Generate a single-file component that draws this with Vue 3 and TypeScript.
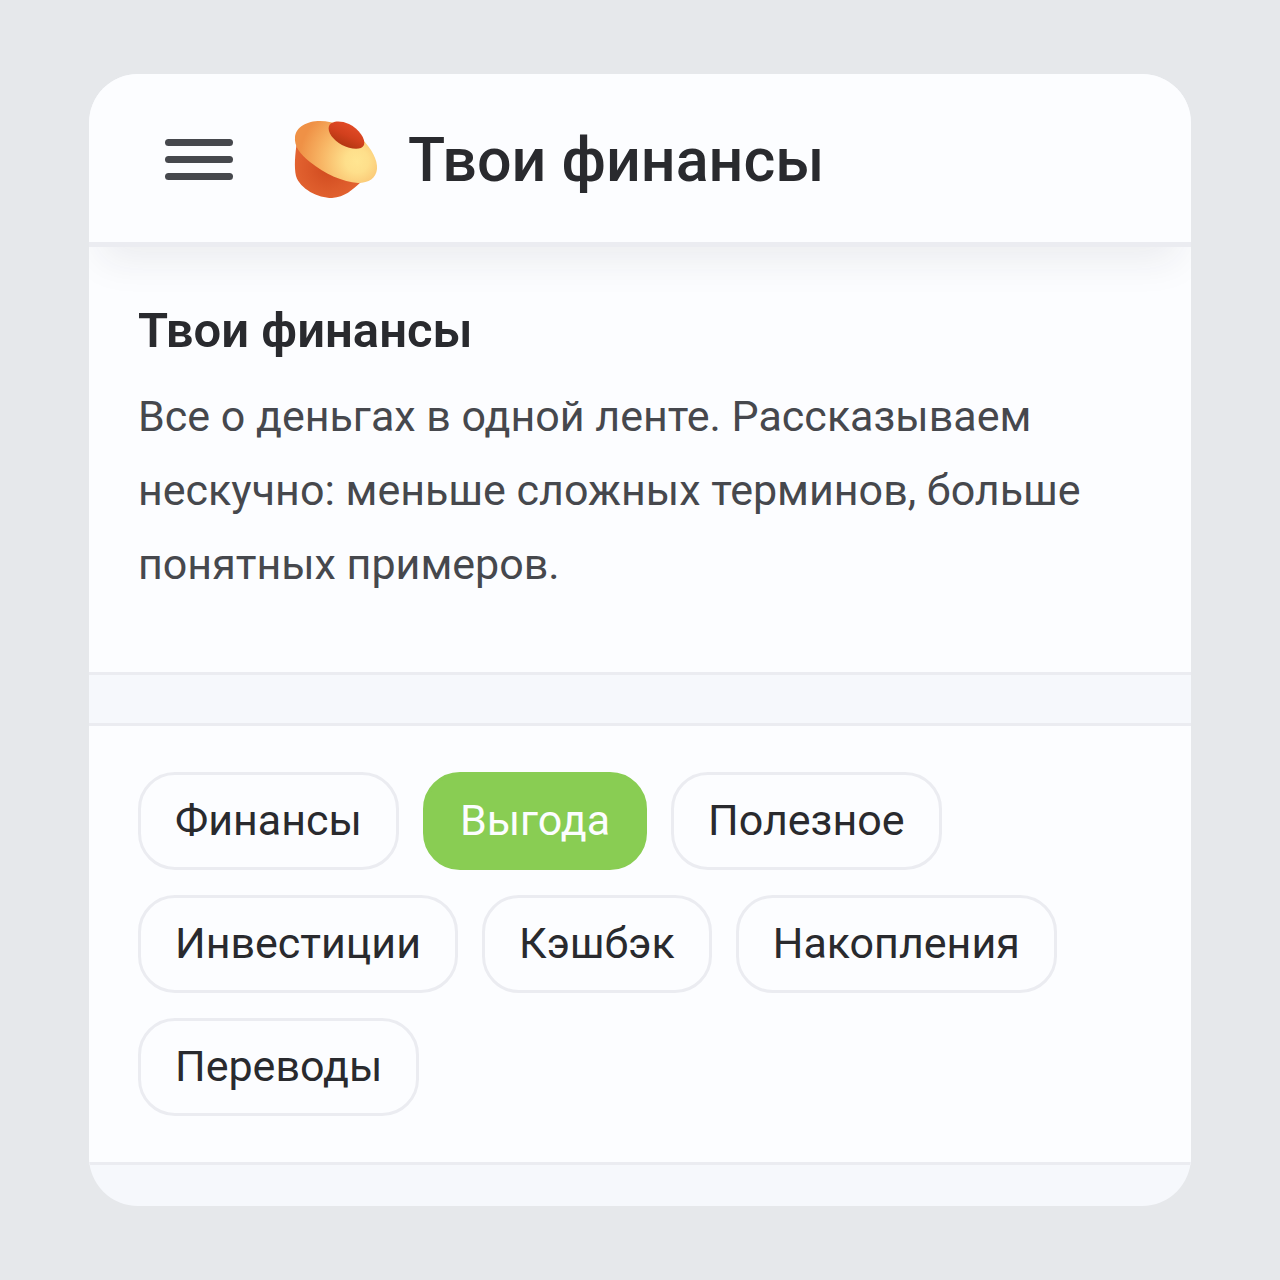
<script setup lang="ts">
import { ref } from 'vue'

const topics: string[] = [
  'Финансы',
  'Выгода',
  'Полезное',
  'Инвестиции',
  'Кэшбэк',
  'Накопления',
  'Переводы',
]
const selected = ref<string>('Выгода')
</script>

<template>
  <div class="page">
    <main class="card">
      <header class="bar">
        <button class="menu" type="button" aria-label="Меню">
          <span class="line"></span>
          <span class="line"></span>
          <span class="line"></span>
        </button>
        <svg class="logo" viewBox="0 0 84 80" aria-hidden="true">
          <defs>
            <radialGradient id="brim" gradientUnits="userSpaceOnUse" cx="63" cy="41" r="58">
              <stop offset="0" stop-color="#ffe591" />
              <stop offset="0.2" stop-color="#fedf8b" />
              <stop offset="0.6" stop-color="#f8b766" />
              <stop offset="1" stop-color="#ef9146" />
            </radialGradient>
            <radialGradient id="base" gradientUnits="userSpaceOnUse" cx="34" cy="48" r="42">
              <stop offset="0" stop-color="#d04a1f" />
              <stop offset="0.5" stop-color="#dc5a2a" />
              <stop offset="1" stop-color="#e66834" />
            </radialGradient>
            <linearGradient id="top" gradientUnits="userSpaceOnUse" x1="57" y1="4" x2="47" y2="26">
              <stop offset="0" stop-color="#e24b27" />
              <stop offset="0.5" stop-color="#d2401d" />
              <stop offset="1" stop-color="#b03611" />
            </linearGradient>
          </defs>
          <path d="M3 22C1 34 0 47 2 56C6 69 24 78 38 78C51 77 58 70 67 62L60 44Z" fill="url(#base)" />
          <path d="M1 17C2 7 13 1 26 1C40 1 56 7 68 19C77 28 84 40 83 49C82 58 75 63 64 63C49 62 31 54 16 42C6 34 0 26 1 17Z" fill="url(#brim)" />
          <path d="M35 6C37 1 46 0 55 4C65 9 72 19 70 25C67 31 56 29 48 25C39 20 33 12 35 6Z" fill="url(#top)" />
        </svg>
        <h1 class="brand">Твои финансы</h1>
      </header>

      <section class="about">
        <h2 class="heading">Твои финансы</h2>
        <p class="text">
          Все о деньгах в одной ленте. Рассказываем нескучно: меньше сложных терминов, больше
          понятных примеров.
        </p>
      </section>

      <nav class="topics" aria-label="Темы">
        <button
          v-for="topic in topics"
          :key="topic"
          type="button"
          class="chip"
          :class="{ active: topic === selected }"
          :aria-pressed="topic === selected"
          @click="selected = topic"
        >
          {{ topic }}
        </button>
      </nav>
    </main>
  </div>
</template>

<style>
body {
  background: #e6e8eb;
}
</style>

<style scoped>
.page {
  box-sizing: border-box;
  min-height: 100vh;
  padding: 74px 89px;
  font-family: Roboto, "Noto Sans", sans-serif;
  color: #292a2e;
}

.card {
  padding-bottom: 41px;
  border-radius: 49px;
  background: #f6f8fc;
  overflow: hidden;
}

.bar {
  position: relative;
  display: flex;
  align-items: center;
  box-sizing: border-box;
  height: 173px;
  padding: 3px 76px 0;
  border-bottom: 5px solid #ebecf1;
  background: #fcfdff;
  box-shadow: 0 25px 37px -12px rgba(41, 42, 46, 0.08);
}

.menu {
  display: flex;
  flex-direction: column;
  gap: 10px;
  width: 68px;
  margin-right: 61px;
  padding: 0;
  border: 0;
  background: none;
  cursor: pointer;
}

.line {
  width: 100%;
  height: 7px;
  border-radius: 4px;
  background: #46484d;
}

.logo {
  width: 84px;
  height: 80px;
  margin-right: 30px;
}

.brand {
  margin: 0;
  font-size: 61px;
  line-height: 74px;
  font-weight: 500;
}

.about {
  padding: 47px 49px 71px;
  border-bottom: 3px solid #ebecf1;
  background: #fcfdff;
}

.heading {
  margin: 0 0 11px;
  font-size: 49px;
  line-height: 74px;
  font-weight: 600;
}

.text {
  margin: 0;
  font-size: 43px;
  line-height: 74px;
  color: #46484d;
}

.topics {
  display: flex;
  flex-wrap: wrap;
  gap: 25px 24px;
  margin-top: 48px;
  padding: 46px 49px;
  border: solid #ebecf1;
  border-width: 3px 0;
  background: #fcfdff;
}

.chip {
  height: 98px;
  padding: 0 34px 2px;
  border: 3px solid #ebecf1;
  border-radius: 37px;
  background: #fcfdff;
  color: #292a2e;
  font: inherit;
  font-size: 43px;
  line-height: 74px;
  cursor: pointer;
}

.chip.active {
  border-color: #89cd53;
  background: #89cd53;
  color: #fcfdff;
}
</style>
